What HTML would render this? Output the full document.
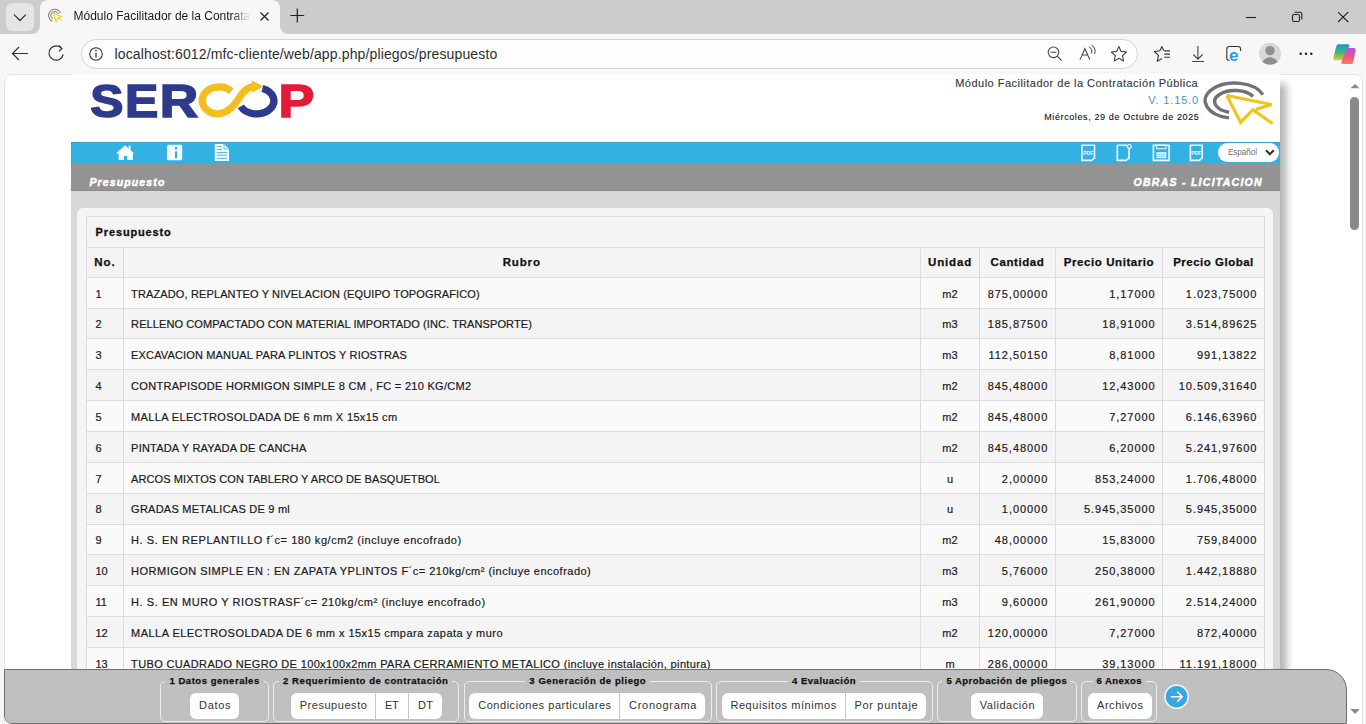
<!DOCTYPE html>
<html><head><meta charset="utf-8">
<style>
*{box-sizing:border-box;margin:0;padding:0}
html,body{width:1366px;height:724px;overflow:hidden;background:#f7f7f7;font-family:"Liberation Sans",sans-serif}
body{position:relative}
.a{position:absolute}
.t{position:absolute;white-space:nowrap;line-height:1}
svg{position:absolute;overflow:visible}
.tb{font-size:11px;color:#1a1a1a;-webkit-text-stroke:0.2px #1a1a1a}
</style></head><body>

<div class="a" style="left:0;top:0;width:1366px;height:34px;background:#cccccc"></div>
<div class="a" style="left:40px;top:0;width:240px;height:34px;background:#f7f7f7;border-radius:8px 8px 0 0"></div>
<div class="a" style="left:32px;top:26px;width:8px;height:8px;background:#f7f7f7"></div><div class="a" style="left:32px;top:18px;width:8px;height:16px;background:#cccccc;border-radius:0 0 8px 0"></div>
<div class="a" style="left:280px;top:26px;width:8px;height:8px;background:#f7f7f7"></div><div class="a" style="left:280px;top:18px;width:8px;height:16px;background:#cccccc;border-radius:0 0 0 8px"></div>
<div class="a" style="left:6px;top:3px;width:28px;height:28px;background:#e4e4e4;border-radius:6px"></div>
<svg style="left:0;top:0" width="40" height="34"><path d="M14 14.6 L20 20.5 L25.8 14.6" fill="none" stroke="#333" stroke-width="1.3"/></svg>
<svg style="left:47px;top:7px" width="16" height="16" viewBox="0 0 16 16">
<path d="M5.2 14.3 A6.3 6.3 0 1 1 13.6 6" fill="none" stroke="#8a8a8a" stroke-width="1.1"/>
<path d="M5.6 11.8 A3.9 3.9 0 1 1 11.2 6.8" fill="none" stroke="#8a8a8a" stroke-width="1.1"/>
<path d="M6.2 6.3 L14.8 9.4 L11.6 10.6 L14.6 14.2 M6.2 6.3 L9.2 14.8 L11.2 11" fill="#fbf3b8" stroke="#e8d54a" stroke-width="1.1"/>
</svg>
<div class="t" style="left:73.5px;top:9px;font-size:12px;color:#1a1a1a;width:176px;overflow:hidden;letter-spacing:0px;-webkit-mask-image:linear-gradient(to right,#000 90%,transparent);mask-image:linear-gradient(to right,#000 90%,transparent);line-height:14px">Módulo Facilitador de la Contratación Pública</div>
<svg style="left:0;top:0" width="1366" height="34"><path d="M260.5 12.5 L268.5 20.5 M268.5 12.5 L260.5 20.5" stroke="#222" stroke-width="1.2"/><path d="M290.4 15.5 H304.2 M297.3 8.6 V22.4" stroke="#222" stroke-width="1.2"/><path d="M1246 17.5 H1256" stroke="#222" stroke-width="1.1"/><rect x="1292.5" y="14.5" width="7" height="7" rx="1.5" fill="none" stroke="#222" stroke-width="1.1"/><path d="M1294.5 12.3 H1300 Q1301.8 12.3 1301.8 14 V19.5" fill="none" stroke="#222" stroke-width="1.1"/><path d="M1338 12.2 L1348.2 22 M1348.2 12.2 L1338 22" stroke="#222" stroke-width="1.1"/></svg>
<svg style="left:0;top:34px" width="80" height="40"><path d="M28 19.5 H12.5 M19 13 L12.5 19.5 L19 26" fill="none" stroke="#333" stroke-width="1.2"/><path d="M61.8 14.5 A7.2 7.2 0 1 0 63.2 20.5" fill="none" stroke="#333" stroke-width="1.2"/><path d="M58.8 11.5 L62 14.8 L58.8 17.4" fill="none" stroke="#333" stroke-width="1.2"/></svg>
<div class="a" style="left:81px;top:38.5px;width:1056.5px;height:30.5px;border:1px solid #d4d4d4;border-radius:16px;background:#fdfdfd"></div>
<svg style="left:80px;top:38px" width="40" height="32"><circle cx="16" cy="16" r="6.3" fill="none" stroke="#333" stroke-width="1.1"/><path d="M16 14.8 V19.5" stroke="#333" stroke-width="1.3"/><circle cx="16" cy="12.6" r="0.8" fill="#333"/></svg>
<div class="t" style="left:114.5px;top:46.5px;font-size:14px;color:#2e2e2e;letter-spacing:0.133px">localhost:6012/mfc-cliente/web/app.php/pliegos/presupuesto</div>
<svg style="left:0;top:0" width="1366" height="74">
<circle cx="1053.5" cy="52.3" r="5.3" fill="none" stroke="#444" stroke-width="1.1"/><path d="M1050.5 52.3 H1056.5 M1057.3 56.2 L1061.6 60.6" stroke="#444" stroke-width="1.1"/>
<path d="M1080 59.6 L1084.9 48.6 L1089.8 59.6 M1082 55 H1087.8" fill="none" stroke="#444" stroke-width="1.1"/>
<path d="M1089.2 46.5 Q1093 49 1091.6 53.3 M1091.5 45 Q1096.5 48.5 1094.6 54" fill="none" stroke="#444" stroke-width="1"/>
<path d="M1118.9 46.6 L1121.1 51.4 L1126.5 52 L1122.5 55.6 L1123.6 61 L1118.9 58.3 L1114.2 61 L1115.3 55.6 L1111.3 52 L1116.7 51.4 Z" fill="none" stroke="#444" stroke-width="1.1" stroke-linejoin="round"/>
<path d="M1161.9 46.5 L1163.8 50.8 M1160 50.8 L1154.3 51.5 L1158.5 55.4 L1157.2 61.4 L1162 58.5" fill="none" stroke="#333" stroke-width="1.1" stroke-linejoin="round"/><path d="M1161.9 46.5 L1159.9 50.8" stroke="#333" stroke-width="1.1"/>
<path d="M1164.3 50.9 H1170 M1164.3 54.1 H1170 M1164.3 57.3 H1170" stroke="#333" stroke-width="1.1"/>
<path d="M1197.9 46 V59 M1193.3 54.5 L1197.9 59.2 L1202.6 54.5 M1192.1 61.5 H1204" fill="none" stroke="#444" stroke-width="1.1"/>
<path d="M1229.5 60.5 Q1226.8 60.5 1226.8 58 V49 Q1226.8 46.5 1229.3 46.5 H1238 Q1240.6 46.5 1240.6 49 V51" fill="none" stroke="#333" stroke-width="1.1"/>
<text x="1229" y="61" font-family="Liberation Sans" font-weight="bold" font-size="17" fill="#2a9de0">e</text>
<circle cx="1270" cy="53.8" r="11" fill="#d8d8d8"/><circle cx="1270" cy="50.6" r="4.7" fill="#8f8f8f"/><path d="M1262.2 61.8 Q1270 52.5 1277.8 61.8 Q1274.5 64.8 1270 64.8 Q1265.5 64.8 1262.2 61.8Z" fill="#8f8f8f"/>
<circle cx="1300.7" cy="53.8" r="1.25" fill="#222"/><circle cx="1306" cy="53.8" r="1.25" fill="#222"/><circle cx="1311.3" cy="53.8" r="1.25" fill="#222"/>
<defs><linearGradient id="cpa" x1="0" y1="0" x2="0" y2="1"><stop offset="0" stop-color="#1d8fe0"/><stop offset=".55" stop-color="#3fc06a"/><stop offset="1" stop-color="#f2c12b"/></linearGradient>
<linearGradient id="cpb" x1="0" y1="0" x2="0" y2="1"><stop offset="0" stop-color="#b84fd8"/><stop offset=".6" stop-color="#f0558a"/><stop offset="1" stop-color="#f28a3c"/></linearGradient></defs>
<path d="M1338.6 44.2 H1347.6 Q1350 44.2 1349.2 46.6 L1344.6 58.2 Q1343.8 60.2 1341.6 60.2 H1335.4 Q1332.8 60.2 1333.5 57.6 L1336.2 46.6 Q1336.8 44.2 1338.6 44.2Z" fill="url(#cpa)"/>
<path d="M1351.8 64 H1343.2 Q1340.8 64 1341.5 61.7 L1346 50.2 Q1346.8 48.1 1349.2 48.1 H1353.6 Q1356.2 48.1 1355.5 50.7 L1353.4 61.6 Q1353 64 1351.8 64Z" fill="url(#cpb)"/>
</svg>
<div class="a" style="left:3.5px;top:73.5px;width:1359px;height:660px;background:#fff;border:1px solid #e4e4e4;border-radius:8px"></div>
<svg style="left:1340px;top:74px" width="22" height="650"><path d="M10.5 14.3 L15 10 L19.5 14.3Z" fill="#8a8a8a"/><rect x="10" y="23" width="9" height="133" rx="4.5" fill="#8a8a8a"/><path d="M10.3 635 L15 640 L19.7 635Z" fill="#8a8a8a"/></svg>
<div class="a" style="left:4px;top:74px;width:1358px;height:649.5px;overflow:hidden;border-radius:8px"><div class="a" style="left:-4px;top:-74px;width:1366px;height:724px">
<div class="a" style="left:1268px;top:84px;width:12px;height:700px;background:#000;box-shadow:6px 0 9px rgba(0,0,0,.33)"></div>
<div class="a" style="left:71px;top:74px;width:1209px;height:650px;background:#fff"></div>
<svg style="left:85px;top:74px" width="240" height="56" viewBox="0 0 240 56">
<g font-family="Liberation Sans" font-weight="bold" font-size="46.5" stroke-width="1.6">
<text x="0" y="42.7" fill="#2e3a8c" stroke="#2e3a8c" transform="translate(5.2,0) scale(1.07,1)">S</text>
<text x="0" y="42.7" fill="#2e3a8c" stroke="#2e3a8c" transform="translate(40.0,0) scale(1.0741,1)">E</text>
<text x="0" y="42.7" fill="#2e3a8c" stroke="#2e3a8c" transform="translate(74.7,0) scale(1.1446,1)">R</text>
<text x="0" y="42.7" fill="#e31b3b" stroke="#e31b3b" transform="translate(193.5,0) scale(1.152,1)">P</text>
</g>
<g transform="translate(105,0)">
<path d="M41.2 17.2 A16.75 13.55 0 1 0 27 39.95 C37 39.95 43 33 47.5 26.5 C52 19.5 56 13.2 63.5 12.6" fill="none" stroke="#f4bf1c" stroke-width="7.3"/>
<path d="M73.4 12.4 L61.5 6.3 L62.2 18.6 Z" fill="#f4bf1c"/>
<path d="M72.4 14.6 A17.35 13.05 0 1 1 50.8 32.4" fill="none" stroke="#2e3a8c" stroke-width="7.3"/>
</g>
</svg>
<div class="t" style="left:955.2px;top:77.59px;font-size:11px;color:#333a44;-webkit-text-stroke:0.15px #333a44;letter-spacing:0.482px">Módulo Facilitador de la Contratación Pública</div>
<div class="t" style="left:1148.2px;top:94.74px;font-size:11px;color:#4596c2;letter-spacing:0.875px">V. 1.15.0</div>
<div class="t" style="left:1044.2px;top:113.08px;font-size:9px;color:#111;-webkit-text-stroke:0.1px #111;letter-spacing:0.613px">Miércoles, 29 de Octubre de 2025</div>
<svg style="left:1200px;top:74px" width="80" height="56">
<path d="M29 43.9 A29.7 17.6 0 1 1 62.8 20.7" fill="none" stroke="#717171" stroke-width="3.4"/>
<path d="M29 38.2 A20.3 11.1 0 1 1 53 22.5" fill="none" stroke="#717171" stroke-width="3.4"/>
<path d="M26.8 21.5 L71.5 30.6 L55.5 35.6 M26.8 21.5 L40.6 48.3 L52.8 35.8 L72.6 49.5" fill="none" stroke="#f2c318" stroke-width="3.1" stroke-linejoin="miter"/>
</svg>
<div class="a" style="left:71px;top:142px;width:1209px;height:22px;background:#33b1e2;border-top:1px solid #3d9dcb"></div>
<div class="a" style="left:71px;top:164px;width:1209px;height:27px;background:#939393;border-bottom:1px solid #8a8a8a"></div>
<svg style="left:0;top:0" width="260" height="170">
<path d="M115.9 153.6 L125.1 145.2 L134.3 153.6 Z" fill="#f6fbfe"/>
<rect x="128.6" y="145.7" width="2" height="4" fill="#f6fbfe"/>
<path d="M118.6 152 H132.9 V160 H127.2 V156 H124 V160 H118.6 Z" fill="#f6fbfe"/>
<rect x="167" y="144.8" width="15.2" height="15.4" rx="1.5" fill="#f6fbfe"/>
<rect x="175" y="146.8" width="2.2" height="2.6" fill="#33b1e2"/><rect x="175" y="151.3" width="2.2" height="6.9" fill="#33b1e2"/>
<path d="M214.8 144 H224 L229 149 V161.1 H214.8 Z" fill="#f6fbfe"/>
<path d="M224 144 V149 H229" fill="none" stroke="#33b1e2" stroke-width="0.8"/>
<path d="M216.7 146.6 H221.6 M216.7 149.4 H222 M216.7 152.4 H227.2 M216.7 155.2 H227.2 M216.7 158.3 H227.2" stroke="#33b1e2" stroke-width="0.9"/>
</svg>
<svg style="left:1070px;top:140px" width="140" height="26" viewBox="1070 140 140 26">
<g fill="none" stroke="#f2fafd" stroke-width="1.6">
<path d="M1081.9 145.2 H1094.5 V158 L1091.5 160.4 H1081.9 Z"/>
<path d="M1117.3 145.2 H1127 M1129 148.5 V158 L1126 160.4 H1117.3 V145.2"/>
<path d="M1153.4 145.2 H1169.1 V160.4 H1153.4 Z"/>
<path d="M1190.4 145.2 H1202.2 V158 L1199.2 160.4 H1190.4 Z"/>
</g>
<circle cx="1129.3" cy="146.4" r="1.9" fill="none" stroke="#f2fafd" stroke-width="1.2"/>
<rect x="1156.5" y="145.2" width="9.5" height="3.5" fill="none" stroke="#f2fafd" stroke-width="1"/>
<rect x="1156.5" y="152.2" width="9.8" height="6" fill="#f2fafd"/>
<path d="M1157.5 154.2 H1165.3 M1157.5 156.2 H1165.3" stroke="#33b1e2" stroke-width="0.7"/>
<text x="1088.2" y="154.5" font-family="Liberation Sans" font-weight="bold" font-size="5" fill="#f2fafd" text-anchor="middle">PDF</text>
<text x="1196.3" y="154.5" font-family="Liberation Sans" font-weight="bold" font-size="5" fill="#f2fafd" text-anchor="middle">PDF</text>
</svg>
<div class="a" style="left:1218px;top:143.3px;width:60.7px;height:18.4px;background:#fff;border-radius:9.2px"></div>
<div class="t" style="left:1227.9px;top:149.2px;font-size:8.2px;color:#707070;letter-spacing:-0.05px">Español</div>
<svg style="left:1260px;top:145px" width="20" height="14"><path d="M6 5.2 L9.9 9.2 L13.8 5.2" fill="none" stroke="#333" stroke-width="2.1"/></svg>
<div class="t" style="left:89.5px;top:176.91px;font-size:10.5px;font-weight:bold;font-style:italic;color:#fff;-webkit-text-stroke:0.5px #fff;letter-spacing:1.12px">Presupuesto</div>
<div class="t" style="left:1133.6px;top:176.91px;font-size:10.5px;font-weight:bold;font-style:italic;color:#fff;-webkit-text-stroke:0.5px #fff;letter-spacing:1.261px">OBRAS - LICITACION</div>
<div class="a" style="left:71px;top:191px;width:1209px;height:533px;background:#d8d8d8"></div>
<div class="a" style="left:77px;top:207.5px;width:1196px;height:517px;background:#f5f5f5;border-radius:6px 6px 0 0"></div>
<div class="a" style="left:86px;top:216px;width:1179px;height:61px;background:#f4f4f4"></div>
<div class="a" style="left:86px;top:277px;width:1179px;height:31px;background:#fafafa"></div>
<div class="a" style="left:86px;top:308px;width:1179px;height:30px;background:#f4f4f4"></div>
<div class="a" style="left:86px;top:338px;width:1179px;height:31px;background:#fafafa"></div>
<div class="a" style="left:86px;top:369px;width:1179px;height:31px;background:#f4f4f4"></div>
<div class="a" style="left:86px;top:400px;width:1179px;height:31px;background:#fafafa"></div>
<div class="a" style="left:86px;top:431px;width:1179px;height:31px;background:#f4f4f4"></div>
<div class="a" style="left:86px;top:462px;width:1179px;height:31px;background:#fafafa"></div>
<div class="a" style="left:86px;top:493px;width:1179px;height:31px;background:#f4f4f4"></div>
<div class="a" style="left:86px;top:524px;width:1179px;height:30px;background:#fafafa"></div>
<div class="a" style="left:86px;top:554px;width:1179px;height:31px;background:#f4f4f4"></div>
<div class="a" style="left:86px;top:585px;width:1179px;height:31px;background:#fafafa"></div>
<div class="a" style="left:86px;top:616px;width:1179px;height:31px;background:#f4f4f4"></div>
<div class="a" style="left:86px;top:647px;width:1179px;height:77px;background:#fafafa"></div>
<div class="a" style="left:86px;top:216px;width:1179px;height:1px;background:#dcdcdc"></div>
<div class="a" style="left:86px;top:247px;width:1179px;height:1px;background:#dcdcdc"></div>
<div class="a" style="left:86px;top:277px;width:1179px;height:1px;background:#dcdcdc"></div>
<div class="a" style="left:86px;top:308px;width:1179px;height:1px;background:#dcdcdc"></div>
<div class="a" style="left:86px;top:338px;width:1179px;height:1px;background:#dcdcdc"></div>
<div class="a" style="left:86px;top:369px;width:1179px;height:1px;background:#dcdcdc"></div>
<div class="a" style="left:86px;top:400px;width:1179px;height:1px;background:#dcdcdc"></div>
<div class="a" style="left:86px;top:431px;width:1179px;height:1px;background:#dcdcdc"></div>
<div class="a" style="left:86px;top:462px;width:1179px;height:1px;background:#dcdcdc"></div>
<div class="a" style="left:86px;top:493px;width:1179px;height:1px;background:#dcdcdc"></div>
<div class="a" style="left:86px;top:524px;width:1179px;height:1px;background:#dcdcdc"></div>
<div class="a" style="left:86px;top:554px;width:1179px;height:1px;background:#dcdcdc"></div>
<div class="a" style="left:86px;top:585px;width:1179px;height:1px;background:#dcdcdc"></div>
<div class="a" style="left:86px;top:616px;width:1179px;height:1px;background:#dcdcdc"></div>
<div class="a" style="left:86px;top:647px;width:1179px;height:1px;background:#dcdcdc"></div>
<div class="a" style="left:86px;top:216px;width:1px;height:508px;background:#dcdcdc"></div>
<div class="a" style="left:1264px;top:216px;width:1px;height:508px;background:#dcdcdc"></div>
<div class="a" style="left:123px;top:247px;width:1px;height:477px;background:#dcdcdc"></div>
<div class="a" style="left:920px;top:247px;width:1px;height:477px;background:#dcdcdc"></div>
<div class="a" style="left:979px;top:247px;width:1px;height:477px;background:#dcdcdc"></div>
<div class="a" style="left:1055px;top:247px;width:1px;height:477px;background:#dcdcdc"></div>
<div class="a" style="left:1162px;top:247px;width:1px;height:477px;background:#dcdcdc"></div>
<div class="t" style="left:95.6px;top:226.59px;font-size:11px;font-weight:bold;color:#111;-webkit-text-stroke:0.3px #111;letter-spacing:0.86px">Presupuesto</div>
<div class="t" style="left:-195px;width:600px;text-align:center;top:257.17px;font-size:11.5px;font-weight:bold;color:#111;-webkit-text-stroke:0.25px #111;letter-spacing:1.0px">No.</div>
<div class="t" style="left:221.75px;width:600px;text-align:center;top:257.17px;font-size:11.5px;font-weight:bold;color:#111;-webkit-text-stroke:0.25px #111;letter-spacing:0.85px">Rubro</div>
<div class="t" style="left:650px;width:600px;text-align:center;top:257.17px;font-size:11.5px;font-weight:bold;color:#111;-webkit-text-stroke:0.25px #111;letter-spacing:0.84px">Unidad</div>
<div class="t" style="left:717.5px;width:600px;text-align:center;top:257.17px;font-size:11.5px;font-weight:bold;color:#111;-webkit-text-stroke:0.25px #111;letter-spacing:0.571px">Cantidad</div>
<div class="t" style="left:809px;width:600px;text-align:center;top:257.17px;font-size:11.5px;font-weight:bold;color:#111;-webkit-text-stroke:0.25px #111;letter-spacing:0.572px">Precio Unitario</div>
<div class="t" style="left:913.5px;width:600px;text-align:center;top:257.17px;font-size:11.5px;font-weight:bold;color:#111;-webkit-text-stroke:0.25px #111;letter-spacing:0.5px">Precio Global</div>
<div class="t tb" style="left:95.5px;top:288.59px;letter-spacing:0px">1</div>
<div class="t tb" style="left:131.1px;top:288.59px;letter-spacing:0.127px">TRAZADO, REPLANTEO Y NIVELACION (EQUIPO TOPOGRAFICO)</div>
<div class="t tb" style="left:650px;width:600px;text-align:center;top:288.59px;letter-spacing:0px">m2</div>
<div class="t tb" style="left:447.29999999999995px;width:600px;text-align:right;top:288.59px;letter-spacing:0.95px"><span style="margin-right:-0.95px">875,00000</span></div>
<div class="t tb" style="left:554.7px;width:600px;text-align:right;top:288.59px;letter-spacing:0.95px"><span style="margin-right:-0.95px">1,17000</span></div>
<div class="t tb" style="left:656.5px;width:600px;text-align:right;top:288.59px;letter-spacing:0.95px"><span style="margin-right:-0.95px">1.023,75000</span></div>
<div class="t tb" style="left:95.5px;top:319.43px;letter-spacing:0px">2</div>
<div class="t tb" style="left:131.1px;top:319.43px;letter-spacing:0.103px">RELLENO COMPACTADO CON MATERIAL IMPORTADO (INC. TRANSPORTE)</div>
<div class="t tb" style="left:650px;width:600px;text-align:center;top:319.43px;letter-spacing:0px">m3</div>
<div class="t tb" style="left:447.29999999999995px;width:600px;text-align:right;top:319.43px;letter-spacing:0.95px"><span style="margin-right:-0.95px">185,87500</span></div>
<div class="t tb" style="left:554.7px;width:600px;text-align:right;top:319.43px;letter-spacing:0.95px"><span style="margin-right:-0.95px">18,91000</span></div>
<div class="t tb" style="left:656.5px;width:600px;text-align:right;top:319.43px;letter-spacing:0.95px"><span style="margin-right:-0.95px">3.514,89625</span></div>
<div class="t tb" style="left:95.5px;top:350.27px;letter-spacing:0px">3</div>
<div class="t tb" style="left:131.1px;top:350.27px;letter-spacing:0.15px">EXCAVACION MANUAL PARA PLINTOS Y RIOSTRAS</div>
<div class="t tb" style="left:650px;width:600px;text-align:center;top:350.27px;letter-spacing:0px">m3</div>
<div class="t tb" style="left:447.29999999999995px;width:600px;text-align:right;top:350.27px;letter-spacing:0.95px"><span style="margin-right:-0.95px">112,50150</span></div>
<div class="t tb" style="left:554.7px;width:600px;text-align:right;top:350.27px;letter-spacing:0.95px"><span style="margin-right:-0.95px">8,81000</span></div>
<div class="t tb" style="left:656.5px;width:600px;text-align:right;top:350.27px;letter-spacing:0.95px"><span style="margin-right:-0.95px">991,13822</span></div>
<div class="t tb" style="left:95.5px;top:381.11px;letter-spacing:0px">4</div>
<div class="t tb" style="left:131.1px;top:381.11px;letter-spacing:0.29px">CONTRAPISODE HORMIGON SIMPLE 8 CM , FC = 210 KG/CM2</div>
<div class="t tb" style="left:650px;width:600px;text-align:center;top:381.11px;letter-spacing:0px">m2</div>
<div class="t tb" style="left:447.29999999999995px;width:600px;text-align:right;top:381.11px;letter-spacing:0.95px"><span style="margin-right:-0.95px">845,48000</span></div>
<div class="t tb" style="left:554.7px;width:600px;text-align:right;top:381.11px;letter-spacing:0.95px"><span style="margin-right:-0.95px">12,43000</span></div>
<div class="t tb" style="left:656.5px;width:600px;text-align:right;top:381.11px;letter-spacing:0.95px"><span style="margin-right:-0.95px">10.509,31640</span></div>
<div class="t tb" style="left:95.5px;top:411.95px;letter-spacing:0px">5</div>
<div class="t tb" style="left:131.1px;top:411.95px;letter-spacing:0.356px">MALLA ELECTROSOLDADA DE 6 mm X 15x15 cm</div>
<div class="t tb" style="left:650px;width:600px;text-align:center;top:411.95px;letter-spacing:0px">m2</div>
<div class="t tb" style="left:447.29999999999995px;width:600px;text-align:right;top:411.95px;letter-spacing:0.95px"><span style="margin-right:-0.95px">845,48000</span></div>
<div class="t tb" style="left:554.7px;width:600px;text-align:right;top:411.95px;letter-spacing:0.95px"><span style="margin-right:-0.95px">7,27000</span></div>
<div class="t tb" style="left:656.5px;width:600px;text-align:right;top:411.95px;letter-spacing:0.95px"><span style="margin-right:-0.95px">6.146,63960</span></div>
<div class="t tb" style="left:95.5px;top:442.79px;letter-spacing:0px">6</div>
<div class="t tb" style="left:131.1px;top:442.79px;letter-spacing:0.2px">PINTADA Y RAYADA DE CANCHA</div>
<div class="t tb" style="left:650px;width:600px;text-align:center;top:442.79px;letter-spacing:0px">m2</div>
<div class="t tb" style="left:447.29999999999995px;width:600px;text-align:right;top:442.79px;letter-spacing:0.95px"><span style="margin-right:-0.95px">845,48000</span></div>
<div class="t tb" style="left:554.7px;width:600px;text-align:right;top:442.79px;letter-spacing:0.95px"><span style="margin-right:-0.95px">6,20000</span></div>
<div class="t tb" style="left:656.5px;width:600px;text-align:right;top:442.79px;letter-spacing:0.95px"><span style="margin-right:-0.95px">5.241,97600</span></div>
<div class="t tb" style="left:95.5px;top:473.63px;letter-spacing:0px">7</div>
<div class="t tb" style="left:131.1px;top:473.63px;letter-spacing:0.08px">ARCOS MIXTOS CON TABLERO Y ARCO DE BASQUETBOL</div>
<div class="t tb" style="left:650px;width:600px;text-align:center;top:473.63px;letter-spacing:0px">u</div>
<div class="t tb" style="left:447.29999999999995px;width:600px;text-align:right;top:473.63px;letter-spacing:0.95px"><span style="margin-right:-0.95px">2,00000</span></div>
<div class="t tb" style="left:554.7px;width:600px;text-align:right;top:473.63px;letter-spacing:0.95px"><span style="margin-right:-0.95px">853,24000</span></div>
<div class="t tb" style="left:656.5px;width:600px;text-align:right;top:473.63px;letter-spacing:0.95px"><span style="margin-right:-0.95px">1.706,48000</span></div>
<div class="t tb" style="left:95.5px;top:504.47px;letter-spacing:0px">8</div>
<div class="t tb" style="left:131.1px;top:504.47px;letter-spacing:0.239px">GRADAS METALICAS DE 9 ml</div>
<div class="t tb" style="left:650px;width:600px;text-align:center;top:504.47px;letter-spacing:0px">u</div>
<div class="t tb" style="left:447.29999999999995px;width:600px;text-align:right;top:504.47px;letter-spacing:0.95px"><span style="margin-right:-0.95px">1,00000</span></div>
<div class="t tb" style="left:554.7px;width:600px;text-align:right;top:504.47px;letter-spacing:0.95px"><span style="margin-right:-0.95px">5.945,35000</span></div>
<div class="t tb" style="left:656.5px;width:600px;text-align:right;top:504.47px;letter-spacing:0.95px"><span style="margin-right:-0.95px">5.945,35000</span></div>
<div class="t tb" style="left:95.5px;top:535.31px;letter-spacing:0px">9</div>
<div class="t tb" style="left:131.1px;top:535.31px;letter-spacing:0.572px">H. S. EN REPLANTILLO f´c= 180 kg/cm2 (incluye encofrado)</div>
<div class="t tb" style="left:650px;width:600px;text-align:center;top:535.31px;letter-spacing:0px">m2</div>
<div class="t tb" style="left:447.29999999999995px;width:600px;text-align:right;top:535.31px;letter-spacing:0.95px"><span style="margin-right:-0.95px">48,00000</span></div>
<div class="t tb" style="left:554.7px;width:600px;text-align:right;top:535.31px;letter-spacing:0.95px"><span style="margin-right:-0.95px">15,83000</span></div>
<div class="t tb" style="left:656.5px;width:600px;text-align:right;top:535.31px;letter-spacing:0.95px"><span style="margin-right:-0.95px">759,84000</span></div>
<div class="t tb" style="left:95.5px;top:566.15px;letter-spacing:0px">10</div>
<div class="t tb" style="left:131.1px;top:566.15px;letter-spacing:0.487px">HORMIGON SIMPLE EN : EN ZAPATA YPLINTOS F´c= 210kg/cm² (incluye encofrado)</div>
<div class="t tb" style="left:650px;width:600px;text-align:center;top:566.15px;letter-spacing:0px">m3</div>
<div class="t tb" style="left:447.29999999999995px;width:600px;text-align:right;top:566.15px;letter-spacing:0.95px"><span style="margin-right:-0.95px">5,76000</span></div>
<div class="t tb" style="left:554.7px;width:600px;text-align:right;top:566.15px;letter-spacing:0.95px"><span style="margin-right:-0.95px">250,38000</span></div>
<div class="t tb" style="left:656.5px;width:600px;text-align:right;top:566.15px;letter-spacing:0.95px"><span style="margin-right:-0.95px">1.442,18880</span></div>
<div class="t tb" style="left:95.5px;top:596.99px;letter-spacing:0px">11</div>
<div class="t tb" style="left:131.1px;top:596.99px;letter-spacing:0.56px">H. S. EN MURO Y RIOSTRASF´c= 210kg/cm² (incluye encofrado)</div>
<div class="t tb" style="left:650px;width:600px;text-align:center;top:596.99px;letter-spacing:0px">m3</div>
<div class="t tb" style="left:447.29999999999995px;width:600px;text-align:right;top:596.99px;letter-spacing:0.95px"><span style="margin-right:-0.95px">9,60000</span></div>
<div class="t tb" style="left:554.7px;width:600px;text-align:right;top:596.99px;letter-spacing:0.95px"><span style="margin-right:-0.95px">261,90000</span></div>
<div class="t tb" style="left:656.5px;width:600px;text-align:right;top:596.99px;letter-spacing:0.95px"><span style="margin-right:-0.95px">2.514,24000</span></div>
<div class="t tb" style="left:95.5px;top:627.83px;letter-spacing:0px">12</div>
<div class="t tb" style="left:131.1px;top:627.83px;letter-spacing:0.465px">MALLA ELECTROSOLDADA DE 6 mm x 15x15 cmpara zapata y muro</div>
<div class="t tb" style="left:650px;width:600px;text-align:center;top:627.83px;letter-spacing:0px">m2</div>
<div class="t tb" style="left:447.29999999999995px;width:600px;text-align:right;top:627.83px;letter-spacing:0.95px"><span style="margin-right:-0.95px">120,00000</span></div>
<div class="t tb" style="left:554.7px;width:600px;text-align:right;top:627.83px;letter-spacing:0.95px"><span style="margin-right:-0.95px">7,27000</span></div>
<div class="t tb" style="left:656.5px;width:600px;text-align:right;top:627.83px;letter-spacing:0.95px"><span style="margin-right:-0.95px">872,40000</span></div>
<div class="t tb" style="left:95.5px;top:658.67px;letter-spacing:0px">13</div>
<div class="t tb" style="left:131.1px;top:658.67px;letter-spacing:0.358px">TUBO CUADRADO NEGRO DE 100x100x2mm PARA CERRAMIENTO METALICO (incluye instalación, pintura)</div>
<div class="t tb" style="left:650px;width:600px;text-align:center;top:658.67px;letter-spacing:0px">m</div>
<div class="t tb" style="left:447.29999999999995px;width:600px;text-align:right;top:658.67px;letter-spacing:0.95px"><span style="margin-right:-0.95px">286,00000</span></div>
<div class="t tb" style="left:554.7px;width:600px;text-align:right;top:658.67px;letter-spacing:0.95px"><span style="margin-right:-0.95px">39,13000</span></div>
<div class="t tb" style="left:656.5px;width:600px;text-align:right;top:658.67px;letter-spacing:0.95px"><span style="margin-right:-0.95px">11.191,18000</span></div>
<div class="a" style="left:4px;top:669px;width:1343px;height:54.5px;background:#c0c0c0;border:1px solid #6f6f6f;border-radius:0 21px 0 7px"></div>
<div class="a" style="left:159.7px;top:681.4px;width:109.80000000000001px;height:40.5px;border:1px solid #ececec;border-radius:5px"></div>
<div class="t" style="left:-85.4px;width:600px;text-align:center;top:675.96px;font-size:9.5px;font-weight:bold;color:#111;-webkit-text-stroke:0.25px #111;letter-spacing:0.526px"><span style="background:#c0c0c0;padding:0 4px">1 Datos generales</span></div>
<div class="a" style="left:273px;top:681.4px;width:185.5px;height:40.5px;border:1px solid #ececec;border-radius:5px"></div>
<div class="t" style="left:65.75px;width:600px;text-align:center;top:675.96px;font-size:9.5px;font-weight:bold;color:#111;-webkit-text-stroke:0.25px #111;letter-spacing:0.567px"><span style="background:#c0c0c0;padding:0 4px">2 Requerimiento de contratación</span></div>
<div class="a" style="left:463.6px;top:681.4px;width:248.39999999999998px;height:40.5px;border:1px solid #ececec;border-radius:5px"></div>
<div class="t" style="left:287.79999999999995px;width:600px;text-align:center;top:675.96px;font-size:9.5px;font-weight:bold;color:#111;-webkit-text-stroke:0.25px #111;letter-spacing:0.562px"><span style="background:#c0c0c0;padding:0 4px">3 Generación de pliego</span></div>
<div class="a" style="left:715.6px;top:681.4px;width:217.0px;height:40.5px;border:1px solid #ececec;border-radius:5px"></div>
<div class="t" style="left:524.1px;width:600px;text-align:center;top:675.96px;font-size:9.5px;font-weight:bold;color:#111;-webkit-text-stroke:0.25px #111;letter-spacing:0.492px"><span style="background:#c0c0c0;padding:0 4px">4 Evaluación</span></div>
<div class="a" style="left:936.5px;top:681.4px;width:140.70000000000005px;height:40.5px;border:1px solid #ececec;border-radius:5px"></div>
<div class="t" style="left:706.85px;width:600px;text-align:center;top:675.96px;font-size:9.5px;font-weight:bold;color:#111;-webkit-text-stroke:0.25px #111;letter-spacing:0.473px"><span style="background:#c0c0c0;padding:0 4px">5 Aprobación de pliegos</span></div>
<div class="a" style="left:1081.2px;top:681.4px;width:76.09999999999991px;height:40.5px;border:1px solid #ececec;border-radius:5px"></div>
<div class="t" style="left:819.25px;width:600px;text-align:center;top:675.96px;font-size:9.5px;font-weight:bold;color:#111;-webkit-text-stroke:0.25px #111;letter-spacing:0.429px"><span style="background:#c0c0c0;padding:0 4px">6 Anexos</span></div>
<div class="a" style="left:190px;top:693px;width:49px;height:26.2px;background:#fff;border-radius:6px"></div>
<div class="t" style="left:199.0px;top:700.49px;font-size:11px;color:#333;letter-spacing:0.7px">Datos</div>
<div class="a" style="left:290.9px;top:693px;width:151.3px;height:26.2px;background:#fff;border-radius:6px"></div>
<div class="a" style="left:375.2px;top:693px;width:1px;height:26.2px;background:#c8c8c8"></div>
<div class="a" style="left:407.9px;top:693px;width:1px;height:26.2px;background:#c8c8c8"></div>
<div class="t" style="left:299.7px;top:700.49px;font-size:11px;color:#333;letter-spacing:0.54px">Presupuesto</div>
<div class="t" style="left:385.09999999999997px;top:700.49px;font-size:11px;color:#333;letter-spacing:-0.4px">ET</div>
<div class="t" style="left:417.9px;top:700.49px;font-size:11px;color:#333;letter-spacing:0.4px">DT</div>
<div class="a" style="left:468.7px;top:693px;width:236.59999999999997px;height:26.2px;background:#fff;border-radius:6px"></div>
<div class="a" style="left:619.3px;top:693px;width:1px;height:26.2px;background:#c8c8c8"></div>
<div class="t" style="left:478.2px;top:700.49px;font-size:11px;color:#333;letter-spacing:0.539px">Condiciones particulares</div>
<div class="t" style="left:629.1px;top:700.49px;font-size:11px;color:#333;letter-spacing:0.689px">Cronograma</div>
<div class="a" style="left:721.8px;top:693px;width:204.20000000000005px;height:26.2px;background:#fff;border-radius:6px"></div>
<div class="a" style="left:845.0px;top:693px;width:1px;height:26.2px;background:#c8c8c8"></div>
<div class="t" style="left:730.4px;top:700.49px;font-size:11px;color:#333;letter-spacing:0.577px">Requisitos mínimos</div>
<div class="t" style="left:854.4px;top:700.49px;font-size:11px;color:#333;letter-spacing:0.7px">Por puntaje</div>
<div class="a" style="left:971px;top:693px;width:72px;height:26.2px;background:#fff;border-radius:6px"></div>
<div class="t" style="left:979.8px;top:700.49px;font-size:11px;color:#333;letter-spacing:0.533px">Validación</div>
<div class="a" style="left:1088px;top:693px;width:63.700000000000045px;height:26.2px;background:#fff;border-radius:6px"></div>
<div class="t" style="left:1097.0px;top:700.49px;font-size:11px;color:#333;letter-spacing:0.543px">Archivos</div>
<svg style="left:1160px;top:680px" width="34" height="34"><circle cx="16.6" cy="16.7" r="11.6" fill="#37a8df" stroke="#f4f4f4" stroke-width="1.6"/><path d="M10.8 16.7 H22 M17.3 11.8 L22.2 16.7 L17.3 21.6" fill="none" stroke="#fff" stroke-width="1.5"/></svg>
</div></div>
</body></html>
